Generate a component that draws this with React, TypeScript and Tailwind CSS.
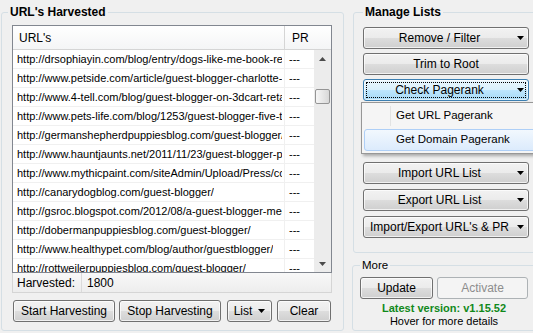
import type { ReactNode } from "react";

const URLS = [
  "http://drsophiayin.com/blog/entry/dogs-like-me-book-review/",
  "http://www.petside.com/article/guest-blogger-charlotte-reed",
  "http://www.4-tell.com/blog/guest-blogger-on-3dcart-retail",
  "http://www.pets-life.com/blog/1253/guest-blogger-five-tips",
  "http://germanshepherdpuppiesblog.com/guest-blogger/",
  "http://www.hauntjaunts.net/2011/11/23/guest-blogger-post/",
  "http://www.mythicpaint.com/siteAdmin/Upload/Press/cover.pdf",
  "http://canarydogblog.com/guest-blogger/",
  "http://gsroc.blogspot.com/2012/08/a-guest-blogger-meet.html",
  "http://dobermanpuppiesblog.com/guest-blogger/",
  "http://www.healthypet.com/blog/author/guestblogger/",
  "http://rottweilerpuppiesblog.com/guest-blogger/",
];

const FONT = "font-['Liberation_Sans',Arial,sans-serif]";

const NORMAL_SKIN =
  "border-[#707070] bg-[linear-gradient(#f2f2f2_0%,#ebebeb_50%,#dddddd_51%,#cfcfcf_100%)] text-black shadow-[inset_0_0_0_1px_rgba(255,255,255,0.7)]";
const HOT_SKIN =
  "border-[#3c7fb1] bg-[linear-gradient(#eaf6fd_0%,#d9f0fc_50%,#bee6fd_51%,#a7d9f5_100%)] text-black shadow-[inset_0_0_0_1px_rgba(255,255,255,0.6)]";
const DISABLED_SKIN = "border-[#adb2b5] bg-[#f4f4f4] text-[#8d8d8d]";

function Caret({ up, color = "#000" }: { up?: boolean; color?: string }) {
  return (
    <svg width="7" height="4" viewBox="0 0 7 4" className="shrink-0">
      <path d={up ? "M0 4h7L3.5 0z" : "M0 0h7L3.5 4z"} fill={color} />
    </svg>
  );
}

function WinButton({
  label,
  arrow,
  hot,
  disabled,
  className = "",
}: {
  label: string;
  arrow?: boolean;
  hot?: boolean;
  disabled?: boolean;
  className?: string;
}) {
  const skin = disabled ? DISABLED_SKIN : hot ? HOT_SKIN : NORMAL_SKIN;
  return (
    <button
      type="button"
      className={`relative flex h-[22px] shrink-0 items-center rounded-[3px] border text-[12px] leading-none ${skin} ${className}`}
    >
      <span className="flex-1 text-center whitespace-nowrap">{label}</span>
      {arrow ? (
        <span className="flex w-[13px] justify-start pl-[2px]">
          <Caret />
        </span>
      ) : null}
      {hot ? (
        <span className="pointer-events-none absolute inset-[2px] border border-dotted border-black" />
      ) : null}
    </button>
  );
}

function GroupBox({
  title,
  bold = true,
  className = "",
  legendClass = "",
  children,
}: {
  title: string;
  bold?: boolean;
  className?: string;
  legendClass?: string;
  children: ReactNode;
}) {
  return (
    <fieldset className={`rounded-[3px] border border-[#d5dfe5] ${className}`}>
      <legend
        className={`px-[2px] leading-[14px] text-black ${bold ? "text-[12px] font-bold" : "text-[11.5px]"} ${legendClass}`}
      >
        {title}
      </legend>
      {children}
    </fieldset>
  );
}

function UrlList() {
  return (
    <div className="flex h-[248px] flex-col border border-[#828790] bg-white">
      <div className="flex h-[24px] shrink-0 border-b border-[#d5d5d5] bg-[linear-gradient(#ffffff,#f4f5f6)] text-[12px]">
        <div className="flex w-[272px] items-center border-r border-[#d5d5d5] pl-[6px]">URL's</div>
        <div className="flex flex-1 items-center pl-[7px]">PR</div>
      </div>
      <div className="flex min-h-0 flex-1">
        <div className="flex min-w-0 flex-1 flex-col overflow-hidden">
          {URLS.map((url) => (
            <div key={url} className="flex h-[19px] shrink-0 border-b border-[#f0f0f0] text-[11px]">
              <div className="flex w-[272px] shrink-0 items-center overflow-hidden border-r border-[#f0f0f0] pl-[4px] pr-[2px]">
                <span className="block overflow-hidden whitespace-nowrap">{url}</span>
              </div>
              <div className="flex flex-1 items-center pl-[4px]">---</div>
            </div>
          ))}
        </div>
        <div className="flex w-[17px] shrink-0 flex-col bg-[#ececec]">
          <div className="flex h-[17px] items-center justify-center">
            <Caret up color="#4a4a4a" />
          </div>
          <div className="mx-[1px] mt-[22px] h-[15px] rounded-[2px] border border-[#959595] bg-[linear-gradient(90deg,#f6f6f6,#e6e6e6_55%,#d8d8d8)]" />
          <div className="flex-1" />
          <div className="flex h-[17px] items-center justify-center">
            <Caret color="#4a4a4a" />
          </div>
        </div>
      </div>
    </div>
  );
}

function PagerankMenu() {
  const items = [
    { label: "Get URL Pagerank", active: false },
    { label: "Get Domain Pagerank", active: true },
  ];
  return (
    <div className="absolute left-[-2px] top-[23px] z-10 flex w-[190px] flex-col gap-[2px] border border-[#979797] bg-[#f5f5f5] p-[2px] shadow-[2px_2px_3px_rgba(0,0,0,0.3)]">
      {items.map((item) => (
        <div
          key={item.label}
          className={`flex h-[22px] items-center rounded-[3px] border text-[11.5px] ${
            item.active
              ? "border-[#aecff7] bg-[linear-gradient(#f2f8fe,#dcebfc)]"
              : "border-transparent"
          }`}
        >
          <span
            className={`w-[26px] self-stretch ${item.active ? "" : "border-r border-[#e2e3e3]"}`}
          />
          <span className="pl-[5px] whitespace-nowrap">{item.label}</span>
        </div>
      ))}
    </div>
  );
}

export default function App() {
  return (
    <div className={`${FONT} flex h-[333px] w-[533px] overflow-hidden bg-[#f0f0f0] pl-[1px] pt-[5px] text-black`}>
      <GroupBox title="URL's Harvested" className="h-[326px] w-[343px] shrink-0 pl-[10px] pr-[11px] pt-[6px]" legendClass="ml-[-4px]">
        <UrlList />
        <div className="flex h-[20px] border-x border-b border-[#d5d5d5] bg-[linear-gradient(#f8f8f8,#ededed)] text-[12px]">
          <div className="flex w-[69px] items-center border-r border-[#dadada] pl-[4px]">Harvested:</div>
          <div className="flex items-center pl-[5px]">1800</div>
        </div>
        <div className="mt-[7px] flex">
          <WinButton label="Start Harvesting" className="ml-[1px] w-[102px]" />
          <WinButton label="Stop Harvesting" className="ml-[4px] w-[102px]" />
          <button
            type="button"
            className={`ml-[6px] flex h-[22px] w-[45px] items-center justify-center gap-[6px] rounded-[3px] border text-[12px] leading-none ${NORMAL_SKIN}`}
          >
            <span>List</span>
            <Caret />
          </button>
          <WinButton label="Clear" className="ml-[5px] w-[54px]" />
        </div>
      </GroupBox>

      <div className="ml-[8px] flex w-[200px] shrink-0 flex-col">
        <GroupBox title="Manage Lists" className="ml-[1px] h-[248px] pl-[9px] pt-[8px]">
          <div className="flex flex-col">
            <WinButton label="Remove / Filter" arrow className="w-[166px]" />
            <WinButton label="Trim to Root" className="mt-[4px] w-[166px]" />
            <div className="relative mt-[4px] w-[166px]">
              <WinButton label="Check Pagerank" arrow hot className="w-[166px]" />
              <PagerankMenu />
            </div>
            <div className="h-[61px]" />
            <WinButton label="Import URL List" arrow className="w-[166px]" />
            <WinButton label="Export URL List" arrow className="mt-[5px] w-[166px]" />
            <WinButton label="Import/Export URL's & PR" arrow className="mt-[5px] w-[166px]" />
          </div>
        </GroupBox>

        <GroupBox title="More" bold={false} className="mt-[5px] h-[73px] pl-[7px] pt-[5px]">
          <div className="flex">
            <WinButton label="Update" className="w-[73px]" />
            <WinButton label="Activate" disabled className="ml-[4px] w-[91px]" />
          </div>
          <div className="mt-[3px] w-[168px] text-center text-[11px] leading-[13px] font-bold text-[#10891a]">
            Latest version: v1.15.52
          </div>
          <div className="w-[168px] text-center text-[11px] leading-[13px]">Hover for more details</div>
        </GroupBox>
      </div>
    </div>
  );
}
